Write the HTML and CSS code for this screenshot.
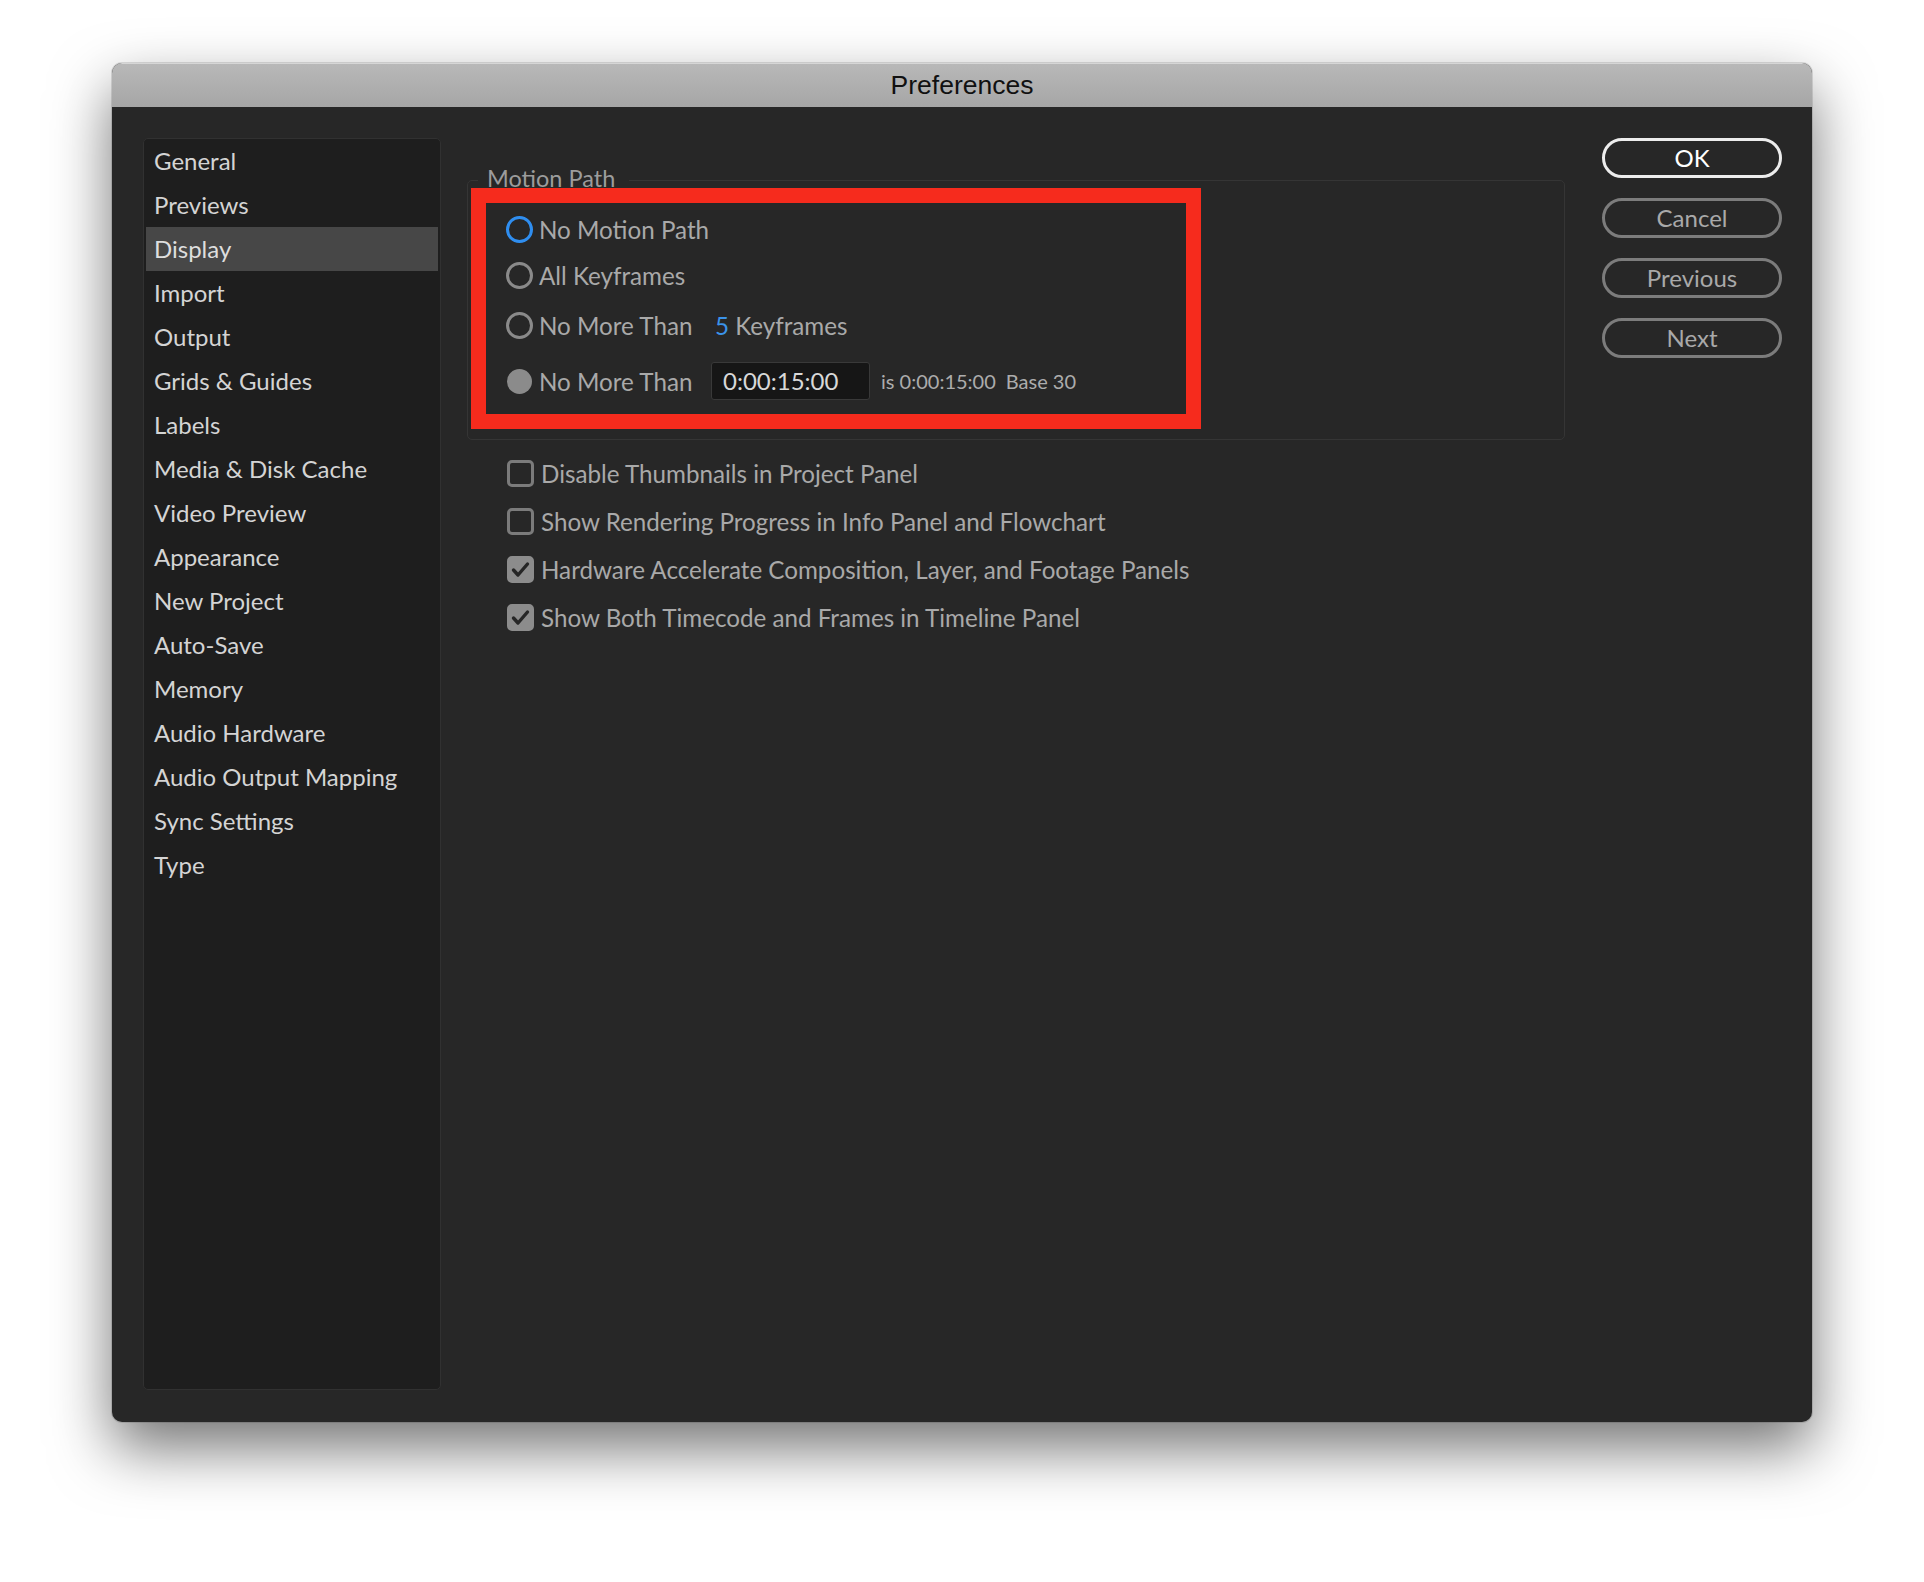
FILE: index.html
```html
<!DOCTYPE html>
<html lang="en">
<head>
<meta charset="utf-8">
<title>Preferences</title>
<link rel="stylesheet" href="styles.css">
</head>
<body>
<div class="window">
  <div class="titlebar">Preferences</div>
  <div class="body">
    <nav class="sidebar">
      <div class="nav-item">General</div>
      <div class="nav-item">Previews</div>
      <div class="nav-item selected">Display</div>
      <div class="nav-item">Import</div>
      <div class="nav-item">Output</div>
      <div class="nav-item">Grids &amp; Guides</div>
      <div class="nav-item">Labels</div>
      <div class="nav-item">Media &amp; Disk Cache</div>
      <div class="nav-item">Video Preview</div>
      <div class="nav-item">Appearance</div>
      <div class="nav-item">New Project</div>
      <div class="nav-item">Auto-Save</div>
      <div class="nav-item">Memory</div>
      <div class="nav-item">Audio Hardware</div>
      <div class="nav-item">Audio Output Mapping</div>
      <div class="nav-item">Sync Settings</div>
      <div class="nav-item">Type</div>
    </nav>
    <main class="main">
      <fieldset class="group">
        <legend class="group-label">Motion Path</legend>
        <div class="highlight">
          <div class="radio-row r1">
            <span class="radio active"></span>
            <span class="opt-label">No Motion Path</span>
          </div>
          <div class="radio-row r2">
            <span class="radio"></span>
            <span class="opt-label">All Keyframes</span>
          </div>
          <div class="radio-row r3">
            <span class="radio"></span>
            <span class="opt-label fixed">No More Than</span>
            <span class="value"><span class="num">5</span> Keyframes</span>
          </div>
          <div class="radio-row r4">
            <span class="radio filled"></span>
            <span class="opt-label fixed">No More Than</span>
            <span class="timefield">0:00:15:00</span>
            <span class="small">is 0:00:15:00</span>
            <span class="small base">Base 30</span>
          </div>
        </div>
      </fieldset>
      <div class="checks">
        <div class="check-row"><span class="checkbox"></span><span class="opt-label">Disable Thumbnails in Project Panel</span></div>
        <div class="check-row"><span class="checkbox"></span><span class="opt-label">Show Rendering Progress in Info Panel and Flowchart</span></div>
        <div class="check-row"><span class="checkbox checked"><svg viewBox="0 0 27 27" width="27" height="27"><path d="M6.5 14 L11 19 L20.5 8" fill="none" stroke="#262626" stroke-width="3.4" stroke-linecap="round" stroke-linejoin="round"/></svg></span><span class="opt-label">Hardware Accelerate Composition, Layer, and Footage Panels</span></div>
        <div class="check-row"><span class="checkbox checked"><svg viewBox="0 0 27 27" width="27" height="27"><path d="M6.5 14 L11 19 L20.5 8" fill="none" stroke="#262626" stroke-width="3.4" stroke-linecap="round" stroke-linejoin="round"/></svg></span><span class="opt-label">Show Both Timecode and Frames in Timeline Panel</span></div>
      </div>
    </main>
    <div class="buttons">
      <div class="btn primary">OK</div>
      <div class="btn">Cancel</div>
      <div class="btn">Previous</div>
      <div class="btn">Next</div>
    </div>
  </div>
</div>
</body>
</html>
```

FILE: styles.css
```css
html, body {
  margin: 0;
  padding: 0;
  background: #ffffff;
}
body {
  width: 1924px;
  height: 1582px;
  overflow: hidden;
  font-family: Lato, "Liberation Sans", sans-serif;
}
.window {
  margin: 63px 0 0 112px;
  width: 1700px;
  height: 1359px;
  border-radius: 10px;
  overflow: hidden;
  background: #272727;
  box-shadow: 0 26px 60px 0 rgba(0,0,0,0.55), 0 0 0 1px rgba(0,0,0,0.12);
  display: flex;
  flex-direction: column;
}
.titlebar {
  height: 44px;
  flex: none;
  box-sizing: border-box;
  border-top: 1px solid #d6d6d6;
  background: linear-gradient(#b8b8b8, #a6a6a6);
  color: #111;
  font-family: "Liberation Sans", Arial, sans-serif;
  font-size: 26.5px;
  line-height: 43px;
  text-align: center;
}
.body {
  flex: 1;
  display: flex;
  padding: 31px 30px 32px 31px;
  box-sizing: border-box;
  min-height: 0;
}
.sidebar {
  width: 298px;
  flex: none;
  box-sizing: border-box;
  background: #1e1e1e;
  border: 1px solid #313131;
  border-radius: 5px;
  padding: 0 2px 1px;
}
.nav-item {
  height: 44px;
  line-height: 44px;
  padding-left: 8px;
  font-size: 24px;
  color: #d4d4d4;
}
.nav-item.selected {
  background: #474747;
  color: #dedede;
}
.main {
  width: 1098px;
  flex: none;
  margin-left: 26px;
  padding-top: 31px;
}
.group {
  margin: 0;
  padding: 0 4px 10px 3px;
  border: 1px solid #353535;
  border-radius: 5px;
  min-width: 0;
  box-sizing: border-box;
  width: 1098px;
}
.group-label {
  margin-left: 7px;
  padding: 0 14px 4px 9px;
  font-size: 23.5px;
  line-height: 18px;
  color: #9c9c9c;
}
.highlight {
  width: 730px;
  margin-top: -3px;
  box-sizing: border-box;
  border: 15px solid #f62b1d;
  padding: 6px 0 13px 20px;
}
.radio-row {
  height: 40px;
  display: flex;
  align-items: center;
  font-size: 24.2px;
  color: #a9a9a9;
}
.r2 { margin-top: 6px; }
.r3 { margin-top: 10px; }
.r4 { margin-top: 16px; }
.radio {
  width: 27px;
  height: 27px;
  box-sizing: border-box;
  border-radius: 50%;
  border: 3px solid #8a8a8a;
  flex: none;
}
.radio.active {
  border-color: #2f8ef0;
}
.radio.filled {
  width: 25px;
  height: 25px;
  margin-left: 1px;
  margin-right: 1px;
  background: #8b8b8b;
  border: none;
}
.opt-label {
  margin-left: 6px;
  white-space: nowrap;
}
.opt-label.fixed {
  width: 172px;
  flex: none;
}
.value {
  padding-left: 4px;
}
.num {
  color: #3b93ea;
}
.timefield {
  width: 159px;
  height: 38px;
  box-sizing: border-box;
  background: #161616;
  border: 1px solid #393939;
  border-radius: 3px;
  padding-left: 11px;
  line-height: 36px;
  color: #d8d8d8;
  font-size: 24px;
}
.small {
  font-size: 20px;
  color: #acacac;
  margin-left: 11px;
}
.small.base {
  margin-left: 10px;
}
.checks {
  margin-top: 13px;
  padding-left: 40px;
  display: flex;
  flex-direction: column;
  gap: 8px;
}
.check-row {
  height: 40px;
  display: flex;
  align-items: center;
  font-size: 24.2px;
  color: #a9a9a9;
}
.check-row .opt-label {
  margin-left: 7px;
}
.checkbox {
  width: 27px;
  height: 27px;
  box-sizing: border-box;
  border: 3px solid #7b7b7b;
  border-radius: 5px;
  flex: none;
}
.checkbox.checked {
  background: #8c8c8c;
  border-color: #8c8c8c;
}
.checkbox svg {
  display: block;
  margin: -3px;
}
.buttons {
  width: 180px;
  flex: none;
  margin-left: 37px;
  display: flex;
  flex-direction: column;
  gap: 20px;
}
.btn {
  height: 40px;
  box-sizing: border-box;
  border: 3px solid #7c7c7c;
  border-radius: 20px;
  text-align: center;
  line-height: 33px;
  font-size: 24px;
  color: #a9a9a9;
}
.btn.primary {
  border-color: #ededed;
  color: #ffffff;
}
```
